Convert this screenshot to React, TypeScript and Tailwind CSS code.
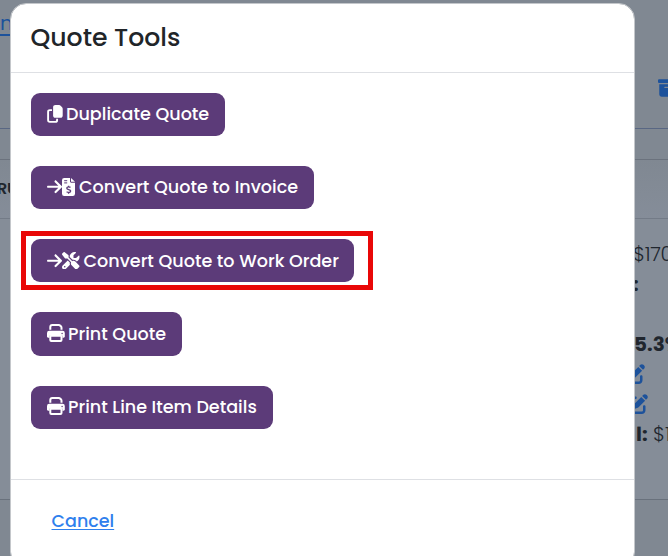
import type { ReactNode } from "react";
import {
  FaArrowRight,
  FaBoxArchive,
  FaPenToSquare,
  FaScrewdriverWrench,
} from "react-icons/fa6";

interface ToolButtonProps {
  icon: ReactNode;
  label: string;
  width: string;
  labelClass: string;
}

function CopyIcon() {
  return (
    <svg viewBox="0 0 16 18" className="w-4 h-[18px] -mt-px" fill="none">
      <path
        d="M5 5.1H2.8c-.9 0-1.7.7-1.7 1.6v8.4c0 1 .8 1.8 1.7 1.8h5.6c1 0 1.7-.8 1.7-1.7v-1.4"
        stroke="currentColor"
        strokeWidth="1.9"
      />
      <path
        d="M8.4.1h3.7c.6 0 1.1.2 1.5.6l1.5 1.6c.4.4.6.9.6 1.5v6.9c0 1.2-1 2.1-2.1 2.1H8.2c-1.2 0-2.1-1-2.1-2.1V2.2C6.1 1 7.1.1 8.4.1Z"
        fill="currentColor"
      />
    </svg>
  );
}

function InvoiceIcon() {
  return (
    <svg viewBox="0 0 13 18" className="w-[13px] h-[18px] -mt-px" fill="none">
      <path
        d="M2.2 0H8v3.5C8 4.2 8.5 4.7 9.2 4.7H13v11a2.2 2.2 0 0 1-2.2 2.2H2.2A2.2 2.2 0 0 1 0 15.7V2.2A2.2 2.2 0 0 1 2.2 0Z"
        fill="currentColor"
      />
      <path d="M9 0l4 3.8H9Z" fill="currentColor" />
      <path d="M2.2 2.7h3M2.2 4.9h3" stroke="#5c3b79" strokeWidth="1" />
      <path
        d="M8.5 9.4c-.6-.4-1.3-.5-2-.5-1 0-1.7.5-1.7 1.3 0 1.8 3.9.9 3.9 2.9 0 .9-.8 1.4-1.9 1.4-.8 0-1.6-.3-2.2-.7M6.6 7.7v1.2M6.6 14.5v1.2"
        stroke="#5c3b79"
        strokeWidth="1.3"
      />
    </svg>
  );
}

function PrintIcon() {
  return (
    <svg viewBox="0 0 18 18" className="w-[18px] h-[18px] -mt-[2px]" fill="none">
      <path
        d="M3.3 5.8V3.1a2 2 0 0 1 2-2h6.5c.6 0 1.1.2 1.5.6l.6.6c.4.4.6.9.6 1.4v2.1"
        stroke="currentColor"
        strokeWidth="2"
      />
      <path
        d="M2.3 6.7h13.2A2.3 2.3 0 0 1 17.8 9v3.6c0 .7-.5 1.2-1.2 1.2h-1.2v-1.5a1 1 0 0 0-1-1H3.6a1 1 0 0 0-1 1v1.5H1.2c-.7 0-1.2-.5-1.2-1.2V9a2.3 2.3 0 0 1 2.3-2.3Z"
        fill="currentColor"
      />
      <rect x="3.3" y="11.8" width="11.2" height="5.2" rx="1" stroke="currentColor" strokeWidth="2" />
      <circle cx="15.1" cy="9.5" r=".7" fill="#5c3b79" />
    </svg>
  );
}

function ToolButton({ icon, label, width, labelClass }: ToolButtonProps) {
  return (
    <button
      className={`flex items-center h-[43.3px] pl-4 rounded-[9px] bg-[#5c3b79] text-white text-[17.57px] font-medium whitespace-nowrap ${width}`}
    >
      {icon}
      <span className={labelClass}>{label}</span>
    </button>
  );
}

function QuotePage() {
  return (
    <div className="flex flex-col h-[556px] text-[#20262e] bg-[#808892]">
      <div className="flex justify-between h-[129px] border-b border-[#596783]">
        <div className="w-[11px] pt-[9px] overflow-hidden text-[20px] leading-7 text-[#1d529b] underline underline-offset-4">
          n
        </div>
        <div className="w-[10px] pt-[78px] overflow-hidden text-[#1d529b]">
          <FaBoxArchive className="w-[20px] h-[20px]" />
        </div>
      </div>
      <div className="h-[31px] border-b border-[#6b727d]" />
      <div className="h-[59px] border-b border-[#737b87] bg-linear-to-b from-[#808892] to-[#858d99]">
        <div className="w-[11px] pt-[19px] -ml-[3px] text-[16px] leading-5 font-semibold tracking-[-0.3px] whitespace-nowrap">
          RU
        </div>
      </div>
      <div className="flex justify-end h-[281px] pt-5 border-b border-[#69717c] bg-[#858d98]">
        <div className="flex flex-col w-[35px] overflow-hidden text-[20px] leading-[30px] whitespace-nowrap">
          <span className="font-light tracking-[-0.3px]">$170</span>
          <span className="font-bold">:</span>
          <span className="h-[30px]" />
          <span className="pl-px font-bold">5.3%</span>
          <span className="flex items-center h-[30px] text-[#1d529b]">
            <FaPenToSquare className="-ml-[8px] w-[20px] h-[20px]" />
          </span>
          <span className="flex items-center h-[30px] text-[#1d529b]">
            <FaPenToSquare className="-ml-[5px] w-[20px] h-[20px]" />
          </span>
          <span className="pl-[3px] font-light">
            <b className="font-bold">l:</b> $1
          </span>
        </div>
      </div>
      <div className="flex-1" />
    </div>
  );
}

function QuoteToolsModal() {
  return (
    <div className="absolute left-[10px] top-[3px] w-[625px] h-[565px] flex flex-col rounded-2xl border border-[#c4c7cb] bg-white bg-clip-padding">
      <div className="h-[69px] pl-[19.5px] pt-[16px] border-b border-[#dee0e4]">
        <h1 className="text-[25.15px] leading-[35px] font-medium text-[#212529]">
          Quote Tools
        </h1>
      </div>
      <div className="flex flex-col items-start gap-[29.95px] h-[407px] pl-5 pt-[19.65px] border-b border-[#dee0e4]">
        <ToolButton
          icon={<CopyIcon />}
          label="Duplicate Quote"
          width="w-[194px]"
          labelClass="ml-[3px]"
        />
        <ToolButton
          icon={
            <>
              <FaArrowRight className="w-[15px] h-[17.5px] -mt-px" />
              <InvoiceIcon />
            </>
          }
          label="Convert Quote to Invoice"
          width="w-[283px]"
          labelClass="ml-[4px]"
        />
        <div className="-ml-[10px] -my-[8px] pl-[5px] pt-[3px] w-[352px] h-[59.3px] border-[5px] border-[#e90707]">
          <ToolButton
            icon={
              <>
                <FaArrowRight className="w-[15px] h-[17.5px] -mt-px" />
                <FaScrewdriverWrench className="w-[17.5px] h-[17.5px] -mt-px" />
              </>
            }
            label="Convert Quote to Work Order"
            width="w-[323px]"
            labelClass="ml-[4px]"
          />
        </div>
        <ToolButton
          icon={<PrintIcon />}
          label="Print Quote"
          width="w-[151px]"
          labelClass="ml-[3px]"
        />
        <ToolButton
          icon={<PrintIcon />}
          label="Print Line Item Details"
          width="w-[242px]"
          labelClass="ml-[3px]"
        />
      </div>
      <div className="pl-[40.5px] pt-[28px]">
        <a
          href="#"
          className="text-[17.5px] leading-[26px] font-medium text-[#2f80ed] underline underline-offset-2"
        >
          Cancel
        </a>
      </div>
    </div>
  );
}

export default function App() {
  return (
    <main className="relative w-[668px] h-[556px] overflow-hidden font-[Poppins,Inter,sans-serif]">
      <QuotePage />
      <QuoteToolsModal />
    </main>
  );
}
